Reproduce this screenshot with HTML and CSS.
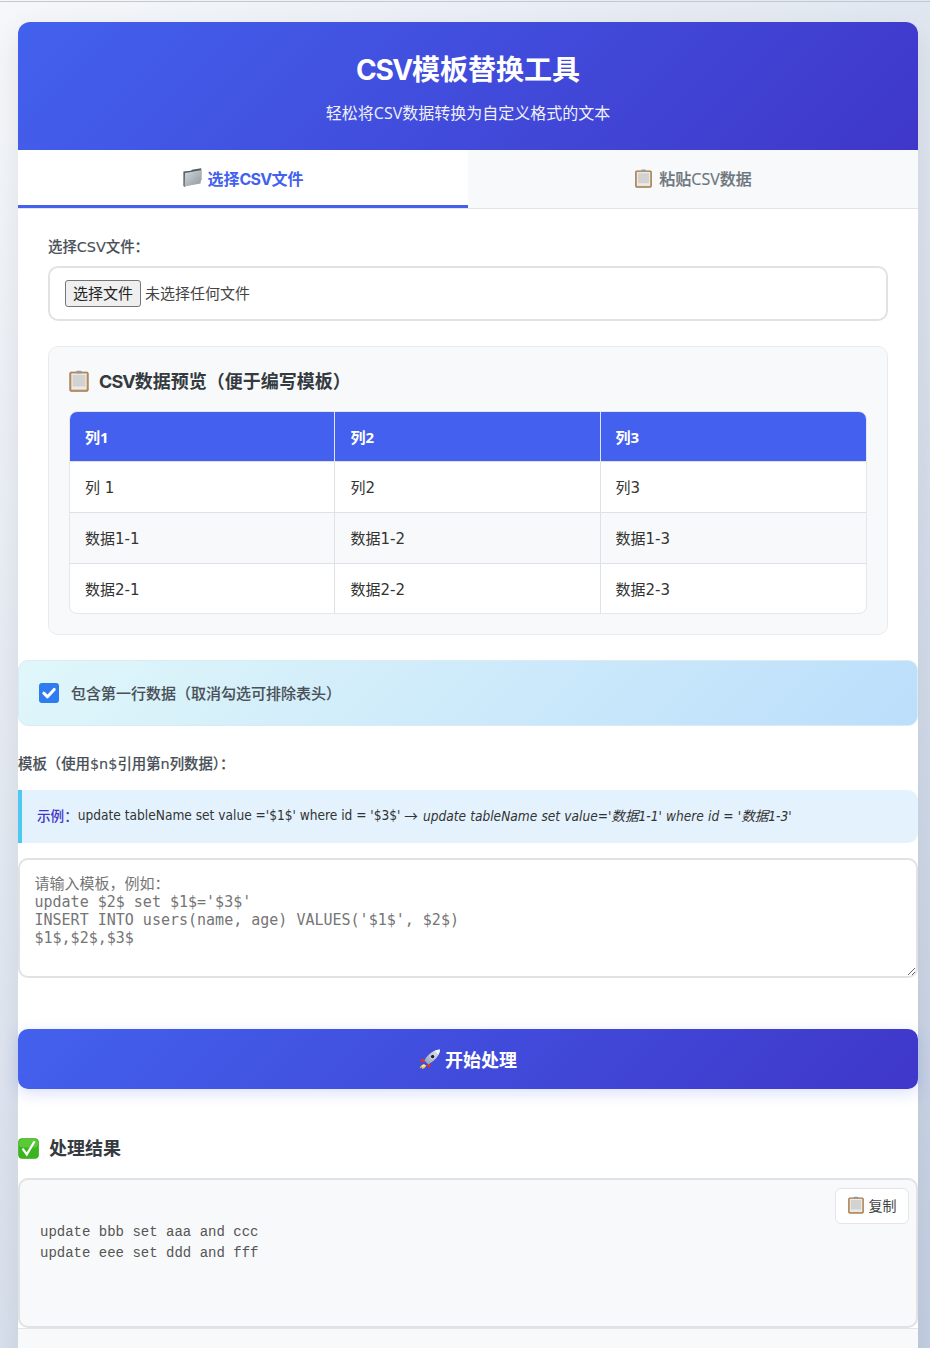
FILE: index.html
```html
<!DOCTYPE html>
<html lang="zh-CN">
<head>
<meta charset="utf-8">
<title>CSV模板替换工具</title>
<link rel="stylesheet" href="styles.css">
</head>
<body>
<svg width="0" height="0" class="defs" aria-hidden="true">
  <defs>
    <linearGradient id="fg" x1="0" y1="0" x2="1" y2="1"><stop offset="0" stop-color="#d4dadd"/><stop offset="1" stop-color="#8b969c"/></linearGradient>
    <linearGradient id="rb" x1="0" y1="1" x2="1" y2="0"><stop offset="0" stop-color="#8f9cb8"/><stop offset="1" stop-color="#e4e9f2"/></linearGradient>
    <symbol id="clip" viewBox="0 0 18 20">
      <rect x="0.7" y="2" width="16.6" height="17.3" rx="1" fill="#c79a6a" stroke="#8f6b45" stroke-width="0.8"/>
      <rect x="2.1" y="3.2" width="13.8" height="14.6" fill="#ecebe8"/>
      <rect x="3.2" y="4.5" width="11.6" height="10.5" fill="#d2d2d0"/>
      <rect x="6.5" y="0.6" width="5" height="2.6" rx="0.8" fill="#9a9a98"/>
    </symbol>
    <symbol id="folder" viewBox="0 0 19 19">
      <path d="M0.4 3.6 L8 2.8 L9 1.8 L18.2 0.2 L18.4 12 L1.4 18.8 L0.4 18 Z" fill="#4e585d"/>
      <path d="M1.9 5 L18.9 2 L17.6 15.4 L1.6 18.6 Z" fill="url(#fg)"/>
    </symbol>
    <symbol id="rocket" viewBox="0 0 22 20">
      <path d="M4.5 15 Q1.5 16 0.5 19.5 Q2 18.5 3.2 18.5 L3 20 Q6.5 19 7.4 16.5 Z" fill="#f3cc4a"/>
      <path d="M5.2 15.4 Q3.5 16.2 2.8 17.8 Q4.6 17.4 6.4 16.4 Z" fill="#f0f0ee"/>
      <path d="M4.5 9.8 L1 11 L2.4 13.5 L6 12.5 Z" fill="#d9362b"/>
      <path d="M11.8 15.2 L10.6 19 L8 17.4 L9 13.8 Z" fill="#d9362b"/>
      <path d="M21 0.6 C15 0.8 9.5 4.5 5.4 11.4 L9.4 15.4 C16 11.5 20.6 6.5 21 0.6 Z" fill="url(#rb)"/>
      <path d="M21 0.6 C19.2 0.7 17.4 1.2 15.8 2 L19.6 5.8 C20.4 4.2 20.9 2.4 21 0.6 Z" fill="#f0f3f8"/>
      <circle cx="13.6" cy="7.6" r="2.2" fill="#23222c" stroke="#eef1f6" stroke-width="0.8"/>
    </symbol>
    <symbol id="check" viewBox="0 0 21 21">
      <rect x="0.4" y="0.4" width="20.2" height="20.2" rx="4" fill="#3bb51d" stroke="#2f9a17" stroke-width="0.6"/>
      <rect x="1" y="1" width="19" height="8.5" rx="3.5" fill="#73d94a" opacity="0.55"/>
      <path d="M4.6 10.6 L8.8 16.4 L16.6 3.2" fill="none" stroke="#fff" stroke-width="2.2"/>
    </symbol>
  </defs>
</svg>
<div class="topline"></div>
<main class="container">
  <header class="hero">
    <h1><span class="lat">CSV</span>模板替换工具</h1>
    <p>轻松将CSV数据转换为自定义格式的文本</p>
  </header>
  <nav class="tabs">
    <div class="tab active"><svg class="ic"><use href="#folder"/></svg><span>选择<span class="lat">CSV</span>文件</span></div>
    <div class="tab"><svg class="ic ic-clip"><use href="#clip"/></svg><span>粘贴CSV数据</span></div>
  </nav>
  <section class="panel">
    <label class="label">选择CSV文件：</label>
    <div class="filebox">
      <button class="file-btn">选择文件</button>
      <span class="file-name">未选择任何文件</span>
    </div>
    <div class="preview">
      <h3 class="preview-title"><svg class="ic-title"><use href="#clip"/></svg><span><span class="lat">CSV</span>数据预览（便于编写模板）</span></h3>
      <div class="table-wrap">
        <table>
          <thead><tr><th>列1</th><th>列2</th><th>列3</th></tr></thead>
          <tbody>
            <tr><td>列 1</td><td>列2</td><td>列3</td></tr>
            <tr><td>数据1-1</td><td>数据1-2</td><td>数据1-3</td></tr>
            <tr><td>数据2-1</td><td>数据2-2</td><td>数据2-3</td></tr>
          </tbody>
        </table>
      </div>
    </div>
  </section>
  <section class="body">
    <div class="option">
      <span class="fake-check"><svg viewBox="0 0 20 20" width="20" height="20"><path d="M4.8 10.2 L8.5 13.8 L15.2 6.4" fill="none" stroke="#fff" stroke-width="3" stroke-linecap="round" stroke-linejoin="round"/></svg></span>
      <span>包含第一行数据（取消勾选可排除表头）</span>
    </div>
    <label class="label tpl-label">模板（使用$n$引用第n列数据）：</label>
    <div class="example"><strong>示例：</strong>update tableName set value ='$1$' where id = '$3$' <span class="arrow">→</span> <em>update tableName set value='数据1-1' where id = '数据1-3'</em></div>
    <textarea class="tpl" rows="5" placeholder="请输入模板，例如：
update $2$ set $1$='$3$'
INSERT INTO users(name, age) VALUES('$1$', $2$)
$1$,$2$,$3$"></textarea>
    <button class="go"><svg class="ic-rocket"><use href="#rocket"/></svg>开始处理</button>
    <h3 class="result-title"><svg class="ic-check"><use href="#check"/></svg>处理结果</h3>
    <div class="result">
      <button class="copy"><svg class="ic-copy"><use href="#clip"/></svg>复制</button>
      <pre>update bbb set aaa and ccc
update eee set ddd and fff</pre>
    </div>
  </section>
  <footer class="foot"></footer>
</main>
</body>
</html>
```
FILE: styles.css
```css
* { box-sizing: border-box; }
html, body { margin: 0; height: 1348px; overflow: hidden; }
body {
  background: linear-gradient(135deg, #f5f7fa 0%, #c3cfe2 100%);
  font-family: "Open Sans", "Noto Sans CJK SC", sans-serif;
  color: #333;
  padding-top: 1px;
}
.defs { position: absolute; }
.topline { height: 1px; background: #c4c6d2; }
.lat { font-family: Inter, sans-serif; letter-spacing: -.05em; }
.container {
  width: 900px;
  margin: 20px 0 0 18px;
  background: #fff;
  border-radius: 12px 12px 0 0;
  box-shadow: 0 10px 30px rgba(0,0,0,.08);
}
.hero {
  height: 128px;
  padding-top: 27px;
  text-align: center;
  color: #fff;
  background: linear-gradient(135deg, #4361ee, #3f37c9);
  border-radius: 12px 12px 0 0;
}
.hero h1 { margin: 0; font-family: "Noto Sans CJK SC", sans-serif; font-size: 28px; line-height: 38px; font-weight: 700; }
.hero p { margin: 12px 0 0; font-size: 16px; line-height: 24px; opacity: .92; }
.tabs { display: flex; height: 59px; background: #f8f9fa; border-bottom: 1px solid #e2e4e8; }
.tab {
  flex: 1; height: 58px; padding-bottom: 2px;
  display: flex; align-items: center; justify-content: center; gap: 6px;
  font-size: 16px; font-weight: 500; color: #6c757d;
  -webkit-text-stroke: .2px #6c757d;
}
.tab.active {
  background: #fff; color: #4361ee; font-weight: 700;
  border-bottom: 3px solid #4361ee; padding-bottom: 0;
  -webkit-text-stroke: 0;
}
.ic { width: 19px; height: 19px; }
.panel { padding: 28px 30px 25px; }
.label {
  display: block; font-family: "DejaVu Sans", "Noto Sans CJK SC", sans-serif;
  font-size: 14.4px; line-height: 20px; font-weight: 500; color: #495057;
  -webkit-text-stroke: .15px #495057;
}
.filebox {
  margin-top: 9px; height: 55px;
  display: flex; align-items: center; gap: 4px;
  border: 2px solid #e0e2e6; border-radius: 10px;
  padding: 0 15px; background: #fff;
  font-size: 15px; color: #444;
}
.file-btn {
  width: 76px; height: 27px; padding: 0 0 2px;
  font-family: inherit; font-size: 15px; color: #222;
  background: #efefef; border: 1px solid #767676; border-radius: 3px;
}
.file-name { padding-bottom: 2px; }
.preview {
  margin-top: 25px; padding: 20px;
  background: #f8f9fa; border: 1px solid #e9ecef; border-radius: 10px;
}
.preview-title { height: 30px; padding-bottom: 2px; margin: 0 0 14px; display: flex; align-items: center; gap: 10px; font-size: 18px; line-height: 28px; font-weight: 700; color: #343a40; }
.ic-title { width: 20px; height: 22px; }
.table-wrap { border-radius: 8px; overflow: hidden; border: 1px solid #e5e7eb; background: #fff; }
table { width: 100%; border-collapse: collapse; table-layout: fixed; font-family: "DejaVu Sans", "Noto Sans CJK SC", sans-serif; font-size: 15px; }
th:nth-child(1) { width: 264px; }
th:nth-child(2) { width: 266px; }
th:nth-child(2), td:nth-child(2) { padding-left: 16px; }
th { background: #4361ee; color: #fff; text-align: left; height: 49px; padding: 0 15px; font-family: "Open Sans", "Noto Sans CJK SC", sans-serif; font-weight: 700; border-right: 1px solid #e0e4f4; }
td { height: 51px; padding: 0 15px; border-top: 1px solid #dee2e6; border-right: 1px solid #dee2e6; color: #333; }
th:last-child, td:last-child { border-right: 0; }
tbody tr:nth-child(even) { background: #f8f9fa; }
tbody tr:last-child td { height: 50px; }
.option {
  height: 66px; padding: 0 20px 2px;
  display: flex; align-items: center; gap: 12px;
  font-size: 15px; font-weight: 500; color: #495057;
  -webkit-text-stroke: .1px #495057;
  background: linear-gradient(135deg, #e0f7fa, #bbdefb);
  border: 1px solid #dbeaf4; border-radius: 10px;
}
.fake-check { width: 20px; height: 20px; margin-top: 2px; background: #2f7bf0; border-radius: 3px; display: block; }
.fake-check svg { display: block; }
.tpl-label { margin-top: 28px; }
.example {
  margin-top: 16px; height: 53px; padding: 0 15px 3px;
  display: flex; align-items: center; white-space: pre;
  background: #e3f2fd; border-left: 4px solid #4cc9f0; border-radius: 0 10px 10px 0;
  font-family: "DejaVu Sans Condensed", "DejaVu Sans", "Noto Sans CJK SC", sans-serif; font-size: 13.6px; color: #333;
}
.example strong { color: #3f37c9; font-weight: 500; }
.arrow { font-family: "Noto Sans CJK SC", sans-serif; margin-right: 5px; }
.example em { word-spacing: .3px; }
.tpl {
  display: block; width: 100%; height: 120px; margin-top: 15px;
  border: 2px solid #e0e2e6; border-radius: 10px; padding: 15px 14.5px;
  font-family: "DejaVu Sans Mono", "Noto Sans CJK SC", monospace; font-size: 15px; line-height: 18px;
}
.tpl::placeholder { color: #757575; }
.go {
  display: flex; align-items: center; justify-content: center; gap: 4px;
  width: 100%; height: 60px; margin-top: 51px; border: 0; border-radius: 10px;
  color: #fff; font-family: inherit; font-size: 18px; font-weight: 700;
  background: linear-gradient(135deg, #4361ee, #3f37c9);
  box-shadow: 0 4px 15px rgba(67,97,238,.2);
}
.ic-rocket { width: 22px; height: 20px; }
.result-title { margin: 44px 0 0; display: flex; align-items: center; gap: 10px; font-size: 18px; line-height: 30px; font-weight: 700; color: #343a40; }
.ic-check { width: 21px; height: 21px; }
.result {
  position: relative; height: 150px; margin-top: 15px; padding: 42px 20px 0;
  background: #f8f9fa; border: 2px solid #e0e2e6; border-radius: 10px;
}
.result pre { margin: 0; font-family: "Liberation Mono", monospace; font-size: 14px; line-height: 21px; color: #555; }
.copy {
  position: absolute; top: 8px; right: 7px; width: 74px; height: 36px; padding: 0 0 2px;
  display: flex; align-items: center; justify-content: center; gap: 5px;
  background: #fff; border: 1px solid #e4e6ea; border-radius: 6px;
  font-family: inherit; font-size: 14px; color: #444;
}
.ic-copy { width: 16px; height: 18px; }
.foot { height: 40px; background: #f8f9fa; border-top: 1px solid #e2e4e8; }
```
